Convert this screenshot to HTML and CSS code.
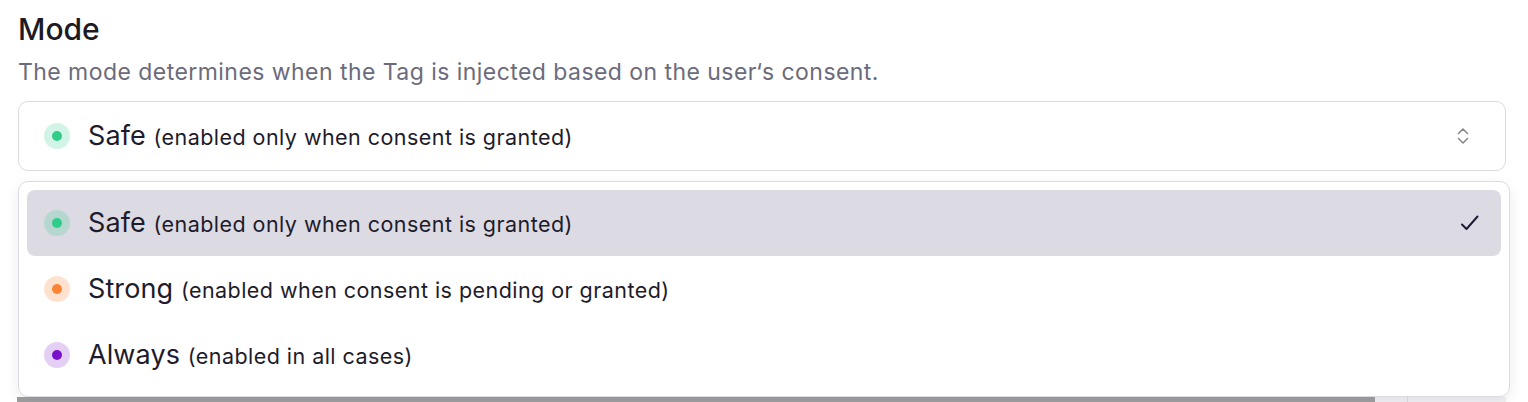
FILE: index.html
```html
<!DOCTYPE html>
<html lang="en">
<head>
<meta charset="utf-8">
<title>Mode</title>
<link rel="stylesheet" href="styles.css">
</head>
<body>
<div class="field">
  <h2 class="field-title">Mode</h2>
  <p class="field-desc">The mode determines when the Tag is injected based on the user‘s consent.</p>
  <div class="select-wrap">
    <button class="select" type="button">
      <span class="dot dot-safe"></span>
      <span class="label">Safe <span class="hint">(enabled only when consent is granted)</span></span>
      <svg class="chevrons" width="16" height="20" viewBox="0 0 16 20" fill="none" stroke="currentColor" stroke-width="1.6" stroke-linecap="round" stroke-linejoin="round"><path d="M3.5 7.5 L8 3 L12.5 7.5"/><path d="M3.5 12.5 L8 17 L12.5 12.5"/></svg>
    </button>
    <div class="behind">
      <div class="behind-bar"></div>
      <div class="behind-side"><div class="behind-line"></div></div>
    </div>
    <ul class="menu">
      <li class="option active">
        <span class="dot dot-safe"></span>
        <span class="label">Safe <span class="hint">(enabled only when consent is granted)</span></span>
        <svg class="check" width="22" height="22" viewBox="0 0 22 22" fill="none" stroke="currentColor" stroke-width="2" stroke-linecap="round" stroke-linejoin="round"><path d="M3 12.5 L7.5 17 L18.5 4.5"/></svg>
      </li>
      <li class="option">
        <span class="dot dot-strong"></span>
        <span class="label">Strong <span class="hint">(enabled when consent is pending or granted)</span></span>
      </li>
      <li class="option">
        <span class="dot dot-always"></span>
        <span class="label">Always <span class="hint">(enabled in all cases)</span></span>
      </li>
    </ul>
  </div>
</div>
</body>
</html>
```
FILE: styles.css
```css
html, body {
  margin: 0;
  padding: 0;
  background: #ffffff;
}
body {
  font-family: Inter, "Noto Sans", "Liberation Sans", sans-serif;
  color: #1e1b2b;
}
.field {
  padding: 11px 22px 0 18px;
}
.field-title {
  margin: 0;
  font-size: 30px;
  line-height: 36px;
  font-weight: 500;
  color: #1c1a22;
}
.field-desc {
  margin: 11px 0 0;
  font-size: 23px;
  line-height: 28px;
  color: #6b6b7b;
  letter-spacing: 0.45px;
}
.select-wrap {
  position: relative;
  margin-top: 15px;
}
.select {
  display: flex;
  align-items: center;
  width: 100%;
  height: 70px;
  padding: 0 34px 0 25px;
  box-sizing: border-box;
  border: 1.5px solid #dcdbe3;
  border-radius: 10px;
  background: #fff;
  font: inherit;
  color: inherit;
  text-align: left;
  cursor: pointer;
}
.select .label {
  flex: 1;
}
.chevrons {
  color: #8a8893;
}
.dot {
  position: relative;
  flex: none;
  width: 26px;
  height: 26px;
  border-radius: 50%;
  margin-right: 18px;
}
.dot::after {
  content: "";
  position: absolute;
  left: 8px;
  top: 8px;
  width: 10px;
  height: 10px;
  border-radius: 50%;
}
.dot-safe { background: rgba(47, 207, 140, 0.22); }
.dot-safe::after { background: #2fcd89; }
.dot-strong { background: rgba(252, 135, 55, 0.24); }
.dot-strong::after { background: #fb8535; }
.dot-always { background: rgba(123, 20, 207, 0.2); }
.dot-always::after { background: #7811ce; }
.label {
  font-size: 27px;
  line-height: 32px;
  letter-spacing: 0.1px;
  color: #1e1b2b;
}
.hint {
  font-size: 21.5px;
  letter-spacing: 0.45px;
}
.behind {
  display: flex;
  margin-top: 226px;
  height: 10px;
}
.behind-bar {
  width: 1358px;
  margin-left: -1px;
  background: #9f9f9f;
}
.behind-side {
  flex: 1;
  background: #f1f1f3;
  position: relative;
}
.behind-line {
  position: absolute;
  left: 32px;
  top: 0;
  bottom: 0;
  width: 1px;
  background: #dedde4;
}
.menu {
  position: absolute;
  left: 0;
  right: -4px;
  top: 80px;
  margin: 0;
  padding: 8px;
  list-style: none;
  background: #fff;
  border: 1px solid #dcdbe3;
  border-radius: 10px;
  box-shadow: 0 4px 14px rgba(40, 30, 70, 0.08);
}
.option {
  display: flex;
  align-items: center;
  height: 66px;
  padding: 0 20px 0 17px;
  border-radius: 8px;
}
.option .label {
  flex: 1;
}
.option.active {
  background: #dcdae3;
}
.check {
  color: #1e1b3a;
}
```
